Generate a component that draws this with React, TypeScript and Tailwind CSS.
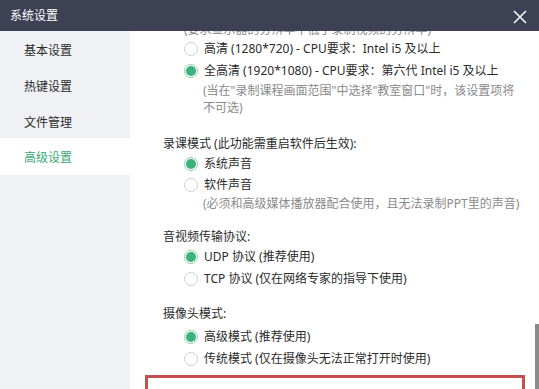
import React from "react";

const font = { fontFamily: '"Segoe UI", "Noto Sans", "Noto Sans CJK SC", sans-serif' };

function Radio({ checked }: { checked?: boolean }) {
  if (checked) {
    return (
      <span className="w-[14px] h-[14px] rounded-full border border-[#8fd0b0] bg-white flex items-center justify-center shrink-0">
        <span className="w-[10px] h-[10px] rounded-full bg-[#3cb17b]" />
      </span>
    );
  }
  return <span className="w-[14px] h-[14px] rounded-full border border-[#cfcfcf] bg-white shrink-0" />;
}

function RadioRow({ checked, children, h = "h-[22px]" }: { checked?: boolean; children: React.ReactNode; h?: string }) {
  return (
    <div className={`flex items-center gap-[6px] pl-[21px] ${h}`}>
      <Radio checked={checked} />
      <span className="text-[12px] text-[#2b2b2b] whitespace-nowrap">{children}</span>
    </div>
  );
}

function Note({ children }: { children: React.ReactNode }) {
  return <div className="pl-[40px] text-[12px] leading-[17px] text-[#8a8a8a] whitespace-nowrap">{children}</div>;
}

function Label({ children }: { children: React.ReactNode }) {
  return <div className="h-[19px] flex items-center text-[12px] text-[#2b2b2b] whitespace-nowrap">{children}</div>;
}

export default function App() {
  const items = ["基本设置", "热键设置", "文件管理", "高级设置"];
  return (
    <div className="w-[539px] h-[389px] overflow-hidden flex flex-col bg-white" style={font}>
      <div className="h-[31px] shrink-0 bg-[#3e4154] flex items-center justify-between pl-[10px] pr-[12px]">
        <span className="text-[12px] text-white">系统设置</span>
        <svg width="14" height="14" viewBox="0 0 14 14" className="mt-[2px]">
          <path d="M1 1 L13 13 M13 1 L1 13" stroke="#ffffff" strokeWidth="1.5" fill="none" />
        </svg>
      </div>
      <div className="flex flex-1 min-h-0">
        <div className="w-[130px] shrink-0 bg-[#eff1f5] flex flex-col">
          {items.map((t, i) => (
            <div
              key={t}
              className={`flex items-center pl-[24px] pt-[3px] text-[12px] ${i === 3 ? "h-[37px] bg-white text-[#3aa976] mt-[-1px]" : "h-[36px] text-[#2b2b2b]"}`}
            >
              {t}
            </div>
          ))}
        </div>
        <div className="flex-1 relative overflow-hidden">
          <div className="mt-[-10px] pl-[15px]">
            <div className="pl-[18px]">
              <div className="pl-[21px] text-[12px] leading-[17px] text-[#8a8a8a] whitespace-nowrap">(要求显示器的分辨率不低于录制视频的分辨率)</div>
              <RadioRow>高清 (1280*720) - CPU要求：Intel i5 及以上</RadioRow>
              <RadioRow checked>全高清 (1920*1080) - CPU要求：第六代 Intel i5 及以上</RadioRow>
              <Note>(当在"录制课程画面范围"中选择"教室窗口"时，该设置项将</Note>
              <Note>不可选)</Note>

              <div className="mt-[18px]">
                <Label>录课模式 (此功能需重启软件后生效):</Label>
                <RadioRow checked h="h-[21px]">系统声音</RadioRow>
                <RadioRow h="h-[21px]">软件声音</RadioRow>
                <Note>(必须和高级媒体播放器配合使用，且无法录制PPT里的声音)</Note>
              </div>

              <div className="mt-[15px]">
                <Label>音视频传输协议:</Label>
                <RadioRow checked>UDP 协议 (推荐使用)</RadioRow>
                <RadioRow>TCP 协议 (仅在网络专家的指导下使用)</RadioRow>
              </div>

              <div className="mt-[14px]">
                <Label>摄像头模式:</Label>
                <div className="mt-[3px]">
                  <RadioRow checked>高级模式 (推荐使用)</RadioRow>
                  <RadioRow>传统模式 (仅在摄像头无法正常打开时使用)</RadioRow>
                </div>
              </div>
            </div>
            <div className="mt-[5px] w-[380px] border-[3px] border-[#c4504e] pt-[10px] pl-[15px] h-[60px]">
              <div className="text-[12px] text-[#2b2b2b] whitespace-nowrap">当同下述切换作为显示时段，比如录课系统设置上次时使用</div>
            </div>
          </div>
          <div className="absolute right-0 top-[293px] bottom-0 w-[4px] bg-[#8a8a8a]" />
        </div>
      </div>
    </div>
  );
}
